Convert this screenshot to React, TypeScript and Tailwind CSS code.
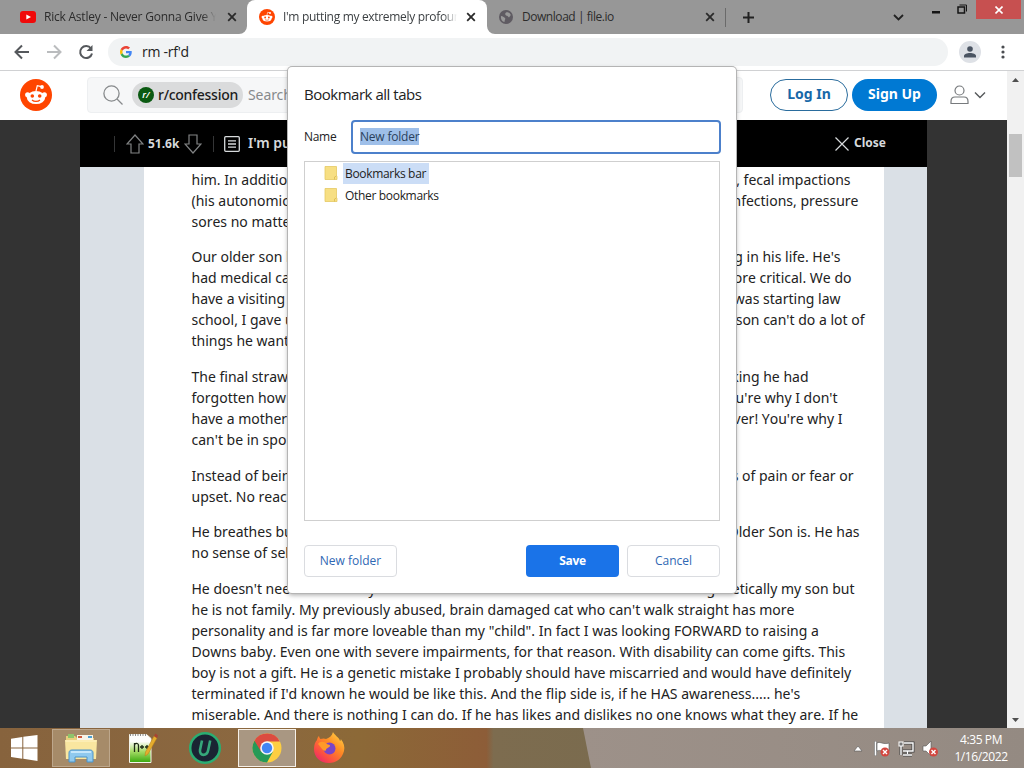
import clsx from "clsx";
import type { ReactNode } from "react";

type Line = { left: string; right?: string; end?: number };

const LEFT_EDGE = 192;

// lines split around the dialog, "end" is where the line stops
const paragraphs: Line[][] = [
  [
    { left: "him. In additio", right: ", fecal impactions", end: 851 },
    { left: "(his autonomic", right: "infections, pressure", end: 859 },
    { left: "sores no matte" },
  ],
  [
    { left: "Our older son h", right: "g in his life. He's", end: 841 },
    { left: "had medical ca", right: "ore critical. We do", end: 852 },
    { left: "have a visiting", right: "was starting law", end: 841 },
    { left: "school, I gave u", right: "son can't do a lot of", end: 865 },
    { left: "things he want" },
  ],
  [
    { left: "The final straw", right: "king he had", end: 809 },
    { left: "forgotten how", right: "ou're why I don't", end: 838 },
    { left: "have a mother", right: "ver! You're why I", end: 843 },
    { left: "can't be in spo" },
  ],
  [
    { left: "Instead of bein", right: "s of pain or fear or", end: 854 },
    { left: "upset. No reac" },
  ],
  [
    { left: "He breathes bu", right: "Older Son is. He has", end: 860 },
    { left: "no sense of sel" },
  ],
  [
    {
      left: "He doesn't need to be in my home. He doesn't know or care where he is. He is genetically my son but",
    },
    {
      left: "he is not family. My previously abused, brain damaged cat who can't walk straight has more",
    },
    {
      left: "personality and is far more loveable than my \"child\". In fact I was looking FORWARD to raising a",
    },
    {
      left: "Downs baby. Even one with severe impairments, for that reason. With disability can come gifts. This",
    },
    {
      left: "boy is not a gift. He is a genetic mistake I probably should have miscarried and would have definitely",
    },
    {
      left: "terminated if I'd known he would be like this. And the flip side is, if he HAS awareness..... he's",
    },
    {
      left: "miserable. And there is nothing I can do. If he has likes and dislikes no one knows what they are. If he",
    },
  ],
];

export default function App() {
  return (
    <div className="relative flex flex-col w-[1024px] h-[768px] overflow-hidden bg-white font-['Open_Sans',sans-serif] text-[#222]">
      <TabStrip />
      <Toolbar />
      <div className="flex h-[657px] overflow-hidden">
        <div className="flex flex-col w-[1007px]">
          <RedditHeader />
          <PostOverlay />
        </div>
        <Scrollbar />
      </div>
      <Taskbar />
      <BookmarkDialog />
    </div>
  );
}

function TabStrip() {
  return (
    <div className="flex h-[34px] shrink-0 bg-[#979797] text-xs">
      <div className="flex items-center w-[247px] pl-5">
        <svg width="16" height="12" viewBox="0 0 16 12">
          <rect width="16" height="12" rx="3" fill="#f00a0a" />
          <path d="M6.3 3.4v5.2L11 6z" fill="#fff" />
        </svg>
        <TabTitle className="w-[172px] ml-2 tracking-[-0.22px] text-[#2c2c2c] [mask-image:linear-gradient(90deg,#000_92%,transparent)]">
          Rick Astley - Never Gonna Give Y
        </TabTitle>
        <CloseGlyph className="ml-[11px]" />
      </div>
      <div className="relative flex items-center w-[240px] pl-3 rounded-t-lg bg-white">
        <Flare className="left-[-8px]" d="M8 0v8H0a8 8 0 0 0 8-8z" />
        <Flare className="right-[-8px]" d="M0 0v8h8a8 8 0 0 1-8-8z" />
        <Snoo size={16} />
        <TabTitle className="w-[174px] ml-2 tracking-[-0.32px] text-[#3c4043] [mask-image:linear-gradient(90deg,#000_92%,transparent)]">
          I'm putting my extremely profoun
        </TabTitle>
        <CloseGlyph className="ml-[9px]" />
      </div>
      <div className="flex items-center w-[239px] pl-3">
        <svg width="14" height="14" viewBox="0 0 14 14">
          <circle cx="7" cy="7" r="7" fill="#5f5b62" />
          <path
            d="M2 6c2 0 2.500 1 4 2 .8 1-.5 2-.5 4C3 11.500 1.500 9 2 6zM7 2.500c2-.8 4 .5 4.800 2.500L10 7.500 8.500 6 7 5.500 6 4z"
            fill="#999"
          />
        </svg>
        <TabTitle className="w-[175px] ml-[9px] tracking-[-0.45px] text-[#2c2c2c]">
          Download | file.io
        </TabTitle>
        <CloseGlyph className="ml-[8px]" />
        <div className="w-px h-[19px] ml-[10px] bg-[#6a6a6a]" />
      </div>
      <div className="flex items-center w-[206px] pl-[16px]">
        <svg width="13" height="13" viewBox="0 0 13 13" className="mr-[138px]">
          <path d="M6.500 1v11M1 6.500h11" stroke="#222" strokeWidth="2" />
        </svg>
        <svg width="11" height="7" viewBox="0 0 11 7">
          <path d="M1 1l4.500 4.500L10 1" stroke="#222" strokeWidth="1.800" fill="none" />
        </svg>
      </div>
      <div className="flex items-start w-[92px]">
        <svg width="8" height="3" viewBox="0 0 8 3" className="mt-[11px]">
          <rect width="8" height="2.500" fill="#151515" />
        </svg>
        <svg width="11" height="10" viewBox="0 0 11 10" className="mt-1 ml-[17px]" fill="none" stroke="#151515">
          <path d="M1 3h6.500v6H1z" strokeWidth="1.500" />
          <path d="M2.500 1H9.500V7.500" />
        </svg>
        <div className="flex items-center justify-center w-[45px] h-[19px] ml-2 bg-[#c75050]">
          <svg width="8" height="8" viewBox="0 0 8 8">
            <path d="M.5.5l7 7M7.500.5l-7 7" stroke="#fff" strokeWidth="1.600" />
          </svg>
        </div>
      </div>
    </div>
  );
}

function TabTitle({
  className,
  children,
}: {
  className: string;
  children: ReactNode;
}) {
  return (
    <span className={clsx("overflow-hidden whitespace-nowrap shrink-0", className)}>
      {children}
    </span>
  );
}

function Flare({ className, d }: { className: string; d: string }) {
  return (
    <svg width="8" height="8" viewBox="0 0 8 8" className={clsx("absolute bottom-0", className)}>
      <path d={d} fill="#fff" />
    </svg>
  );
}

function CloseGlyph({ className }: { className: string }) {
  return (
    <svg width="10" height="10" viewBox="0 0 10 10" className={clsx("shrink-0", className)}>
      <path d="M1.200 1.200l7.600 7.600M8.800 1.200L1.200 8.800" stroke="#2a2a2a" strokeWidth="1.800" />
    </svg>
  );
}

function Snoo({ size }: { size: number }) {
  return (
    <svg width={size} height={size} viewBox="0 0 32 32" className="shrink-0">
      <circle cx="16" cy="16" r="16" fill="#ff4500" />
      <circle cx="7.600" cy="15.800" r="2.500" fill="#fff" />
      <circle cx="24.400" cy="15.800" r="2.500" fill="#fff" />
      <ellipse cx="16" cy="18.600" rx="9.200" ry="6.500" fill="#fff" />
      <path d="M16 12l1.300-5.400 4.200 1" fill="none" stroke="#fff" strokeWidth="1.200" />
      <circle cx="22" cy="8" r="1.900" fill="#fff" />
      <circle cx="12.300" cy="17" r="1.800" fill="#ff4500" />
      <circle cx="19.700" cy="17" r="1.800" fill="#ff4500" />
      <path d="M12 21c2 1.900 6 1.900 8 0" fill="none" stroke="#ff4500" strokeWidth="1.200" />
    </svg>
  );
}

function Toolbar() {
  return (
    <div className="flex items-center h-[37px] shrink-0 pl-[14px] border-b border-[#d0d1d3] bg-white">
      <svg width="80" height="16" viewBox="0 0 80 16" fill="none" strokeWidth="2" className="mr-[14px]">
        <path d="M15 8H2M8 1.500L1.500 8 8 14.500" stroke="#55585c" />
        <path d="M33 8h13M40 1.500L46.500 8 40 14.500" stroke="#babcbe" />
        <path d="M77 4.500A6 6 0 1 0 78 9.500" stroke="#55585c" />
        <path d="M78.500 1v6h-6z" fill="#55585c" />
      </svg>
      <div className="flex items-center w-[840px] h-7 pl-3 rounded-full bg-[#f1f3f4]">
        <GoogleG />
        <span className="ml-[10px] text-sm tracking-[-0.25px]">rm -rf'd</span>
      </div>
      <div className="flex items-center justify-center w-[22px] h-[22px] ml-[11px] rounded-full bg-[#dee1e6]">
        <svg width="12" height="12" viewBox="0 0 12 12" fill="#4a5462">
          <circle cx="6" cy="3" r="2.800" />
          <path d="M0 11.500V10c0-2 3-3 6-3s6 1 6 3v1.500z" />
        </svg>
      </div>
      <svg width="4" height="14" viewBox="0 0 4 14" fill="#4a4d51" className="ml-[20px]">
        <circle cx="2" cy="2" r="1.600" />
        <circle cx="2" cy="7" r="1.600" />
        <circle cx="2" cy="12" r="1.600" />
      </svg>
    </div>
  );
}

function GoogleG() {
  return (
    <svg width="12" height="12" viewBox="0 0 48 48">
      <path fill="#EA4335" d="M24 9.500c3.540 0 6.710 1.220 9.210 3.600l6.850-6.850C35.900 2.380 30.470 0 24 0 14.620 0 6.510 5.380 2.560 13.220l7.980 6.190C12.430 13.720 17.740 9.500 24 9.500z" />
      <path fill="#4285F4" d="M46.980 24.550c0-1.570-.15-3.090-.38-4.550H24v9.020h12.940c-.58 2.960-2.260 5.480-4.780 7.180l7.730 6c4.510-4.180 7.090-10.360 7.090-17.650z" />
      <path fill="#FBBC05" d="M10.530 28.590c-.48-1.450-.76-2.990-.76-4.590s.27-3.140.76-4.590l-7.980-6.190C.92 16.460 0 20.120 0 24c0 3.880.92 7.540 2.560 10.780l7.970-6.190z" />
      <path fill="#34A853" d="M24 48c6.480 0 11.930-2.130 15.890-5.810l-7.730-6c-2.150 1.450-4.920 2.300-8.160 2.300-6.260 0-11.570-4.220-13.470-9.910l-7.980 6.190C6.510 42.620 14.620 48 24 48z" />
    </svg>
  );
}

function RedditHeader() {
  return (
    <div className="flex items-center h-[49px] shrink-0 pl-5 pb-px bg-white font-['Noto_Sans',sans-serif]">
      <Snoo size={32} />
      <div className="flex items-center w-[656px] h-9 ml-[35px] pl-[15px] rounded-sm border border-[#edeff1] bg-[#f6f7f8]">
        <svg width="20" height="20" viewBox="0 0 20 20" fill="none" stroke="#878a8c" strokeWidth="1.300">
          <circle cx="8.500" cy="8.500" r="7.600" />
          <path d="M14 14l5.500 5.500" />
        </svg>
        <div className="flex items-center w-[111px] h-[26px] ml-[9px] pl-[6px] rounded-full bg-[#dadbdc]">
          <div className="flex items-center justify-center w-4 h-4 rounded-full bg-[#0b5a12] text-[9px] font-semibold italic text-white">
            r/
          </div>
          <span className="ml-1 text-sm font-medium tracking-[-0.28px] text-[#1c1c1c]">
            r/confession
          </span>
        </div>
        <span className="ml-[5px] text-sm tracking-[-0.1px] text-[#878a8c]">Search</span>
      </div>
      <button className="w-[78px] h-8 ml-[27px] rounded-full border border-[#2a6c9d] pb-[2px] text-sm font-bold text-[#1868a8]">
        Log In
      </button>
      <button className="w-[85px] h-8 ml-1 rounded-full bg-[#0079d3] pb-[2px] text-sm font-bold text-white">
        Sign Up
      </button>
      <svg width="36" height="20" viewBox="0 0 36 20" fill="none" stroke="#777a7d" strokeWidth="1.200" className="ml-[13px]">
        <circle cx="9.500" cy="5.500" r="4.500" />
        <path d="M1 18.500v-2c0-3 2-4.500 4-4.500h9c2 0 4 1.500 4 4.500v2z" />
        <path d="M25 7.500l5 5 5-5" stroke="#55585a" strokeWidth="1.400" />
      </svg>
    </div>
  );
}

function PostOverlay() {
  return (
    <div className="flex flex-col h-[608px] pl-20 pr-20 bg-[#333] font-['Noto_Sans',sans-serif]">
      <div className="flex items-center w-[847px] h-[47px] shrink-0 pl-[34px] bg-black text-[#d7dadc]">
        <div className="w-px h-4 bg-[#343536]" />
        <svg width="18" height="20" viewBox="0 0 18 20" fill="none" stroke="#818384" strokeWidth="1.200" className="ml-[11px]">
          <path d="M9 1L1 10h4v9h8v-9h4z" />
        </svg>
        <span className="w-[34px] ml-[4px] text-xs font-bold">51.6k</span>
        <svg width="18" height="20" viewBox="0 0 18 20" fill="none" stroke="#818384" strokeWidth="1.200" className="ml-[2px]">
          <path d="M9 19l8-9h-4V1H5v9H1z" />
        </svg>
        <div className="w-px h-4 ml-[11px] bg-[#343536]" />
        <svg width="16" height="16" viewBox="0 0 16 16" fill="none" stroke="#d7dadc" strokeWidth="1.300" className="ml-[10px]">
          <rect x=".7" y=".7" width="14.600" height="14.600" rx="1" />
          <path d="M4 4.800h8M4 8h8M4 11.200h8" />
        </svg>
        <span className="w-[587px] ml-2 pb-px text-sm font-semibold whitespace-nowrap">I'm pu</span>
        <svg width="14" height="14" viewBox="0 0 14 14">
          <path d="M.5.5l13 13M13.500.5l-13 13" stroke="#d7dadc" strokeWidth="1.200" />
        </svg>
        <span className="ml-[5px] pb-[2px] text-xs font-bold">Close</span>
      </div>
      <div className="flex w-[847px] h-[561px] px-[64px] pr-[43px] bg-[#dae0e6] overflow-hidden">
        <div className="flex flex-col gap-[14.6px] w-[740px] pl-[47.500px] pt-[1.8px] bg-white text-sm leading-[21px] [font-kerning:none]">
          {paragraphs.map((lines, i) => (
            <div key={i} className="flex flex-col">
              {lines.map((line) => (
                <div
                  key={line.left}
                  className="flex justify-between h-[21px] whitespace-nowrap"
                  style={line.end ? { width: line.end - LEFT_EDGE } : undefined}
                >
                  <span>{line.left}</span>
                  {line.right && <span>{line.right}</span>}
                </div>
              ))}
            </div>
          ))}
        </div>
      </div>
    </div>
  );
}

function Scrollbar() {
  return (
    <div className="flex flex-col items-center justify-between w-[17px] pt-[7px] pb-[6px] bg-[#f1f1f1]">
      <div className="flex flex-col items-center">
        <svg width="7" height="4" viewBox="0 0 7 4">
          <path d="M0 4l3.500-4L7 4z" fill="#505050" />
        </svg>
        <div className="w-[13px] h-[43px] mt-[52px] bg-[#c1c1c1]" />
      </div>
      <svg width="7" height="4" viewBox="0 0 7 4">
        <path d="M0 0l3.500 4L7 0z" fill="#505050" />
      </svg>
    </div>
  );
}

function BookmarkDialog() {
  return (
    <div className="absolute left-[288px] top-[67px] flex flex-col w-[448px] h-[526px] px-4 rounded-[4px] bg-white text-xs shadow-[0_0_0_1px_#b4b4b4,0_2px_5px_rgba(0,0,0,0.35)]">
      <h1 className="mt-[16px] text-[15px] leading-[22px] tracking-[-0.48px]">
        Bookmark all tabs
      </h1>
      <div className="flex items-center mt-[15px]">
        <span className="w-[47px] shrink-0 tracking-[-0.3px]">Name</span>
        <div className="flex items-center w-[370px] h-[34px] shrink-0 pl-[7px] pb-px rounded-[4px] border-2 border-[#4c80cb]">
          <span className="bg-[#9ebfe9] leading-[17px] tracking-[-0.2px] text-[#2a3f5c]">
            New folder
          </span>
        </div>
      </div>
      <div className="flex flex-col w-[416px] h-[360px] mt-[7px] pl-[19px] border border-[#cfcfcf]">
        <FolderRow label="Bookmarks bar" selected />
        <FolderRow label="Other bookmarks" />
      </div>
      <div className="flex mt-6 font-medium">
        <DialogButton className="mr-[129px] border border-[#dadce0] text-[#2f68b4]">
          New folder
        </DialogButton>
        <DialogButton className="mr-2 bg-[#1a73e8] font-bold tracking-[-0.35px] text-white">
          Save
        </DialogButton>
        <DialogButton className="border border-[#dadce0] text-[#2f68b4]">
          Cancel
        </DialogButton>
      </div>
    </div>
  );
}

function FolderRow({ label, selected }: { label: string; selected?: boolean }) {
  return (
    <div className="flex items-center h-[22px]">
      <svg width="14" height="14" viewBox="0 0 14 14">
        <path d="M1 .5h11.500V10l.5.500v3H1z" fill="#f7df83" stroke="#e6c963" strokeWidth=".8" />
        <path d="M10.500 13.500V11l2-1" fill="none" stroke="#d9b94f" strokeWidth=".8" />
      </svg>
      <span
        className={clsx(
          "h-[21px] ml-[5px] px-[2px] leading-[21px] tracking-[-0.32px]",
          selected && "pr-[3px] bg-[#cbddf6]",
        )}
      >
        {label}
      </span>
    </div>
  );
}

function DialogButton({
  className,
  children,
}: {
  className: string;
  children: ReactNode;
}) {
  return (
    <button className={clsx("w-[93px] h-8 shrink-0 rounded-[4px]", className)}>
      {children}
    </button>
  );
}

function Taskbar() {
  return (
    <div className="relative flex h-10 shrink-0 bg-[linear-gradient(90deg,#87633d_0%,#8b6840_25%,#8c6937_35%,#8d5d38_47.500%,#7d6c4f_48.200%,#7a6b4e_60%)]">
      <div className="absolute inset-y-0 left-[583px] right-0 bg-[linear-gradient(90deg,#9d9189,#948a82)] [clip-path:polygon(0_0,100%_0,100%_100%,8px_100%)]" />
      <div className="relative flex items-center w-full">
        <svg width="27" height="26" viewBox="0 0 27 26" fill="#fff" className="ml-[11px]">
          <path d="M0 3.800L11.300 2v10.400H0zM12.300 1.800L26.500 0v12.400H12.300zM0 13.500h11.300v10.200L0 22zM12.300 13.500h14.200V26l-14.200-2.200z" />
        </svg>
        <div className="flex items-center justify-center w-[58px] h-[38px] ml-[14px] border border-[#bda78c] bg-[#a68b69]">
          <ExplorerIcon />
        </div>
        <NotepadIcon />
        <svg width="34" height="34" viewBox="0 0 34 34" className="ml-[30px]">
          <circle cx="17" cy="17" r="14.800" fill="#1a2433" stroke="#2aad72" strokeWidth="2.500" />
          <path d="M14 9.500l-2 9.500c-.8 6.500 7 6.500 8.200 0l2-9.500" fill="none" stroke="#35a87a" strokeWidth="2.600" />
        </svg>
        <div className="flex items-center justify-center w-[58px] h-[38px] ml-[16px] border border-[#f6f0e8] bg-[#a99782]">
          <ChromeIcon />
        </div>
        <FirefoxIcon />
        <Tray />
        <div className="w-[70px] ml-[7px] text-center text-xs leading-[17px] tracking-[-0.4px] text-white">
          <div>4:35 PM</div>
          <div>1/16/2022</div>
        </div>
      </div>
    </div>
  );
}

function ExplorerIcon() {
  return (
    <svg width="34" height="30" viewBox="0 0 34 30">
      <path d="M2 3h9l2 2h17v20H2z" fill="#e8cf7d" />
      <path d="M4 1h6v4H4z" fill="#8fc46b" />
      <path d="M13 2h16v5H13z" fill="#f8f4e6" />
      <path d="M14 3h4v2h-4z" fill="#cf5b3c" />
      <path d="M24 3h4v2h-4z" fill="#4b9fd0" />
      <path d="M1 7h32l-1 19H2z" fill="#f9e6a0" />
      <path d="M1.500 8h31" stroke="#fff3c7" />
      <path d="M5 29v-9c0-2 1-3 3-3h18c2 0 3 1 3 3v9h-6v-5H11v5z" fill="#8fc9ee" stroke="#4b93c9" />
      <path d="M7 19h20" stroke="#d9f1ff" strokeWidth="1.500" />
    </svg>
  );
}

function NotepadIcon() {
  return (
    <svg width="30" height="32" viewBox="0 0 30 32" className="ml-[18px]">
      <defs>
        <linearGradient id="npp" x1="0" y1="0" x2="0" y2="1">
          <stop offset=".25" stopColor="#fdfdfb" />
          <stop offset=".6" stopColor="#a8dc68" />
          <stop offset="1" stopColor="#38a80c" />
        </linearGradient>
      </defs>
      <path d="M1.500 2.500h17l4.500 4v24H1.500z" fill="url(#npp)" stroke="#f4f4ec" />
      <path d="M2 3h17" stroke="#666" strokeDasharray="1 1.500" strokeWidth="1.500" />
      <path d="M6.500 20v-9M6.500 12.500c2-2 4-1 4 1V20M12 15h4M14 13v4M17 15h4M19 13v4" fill="none" stroke="#1f2b16" strokeWidth="1.300" />
      <path d="M26 4l3 2-9 16-3 2 .5-4z" fill="#e6ad2d" stroke="#b87d18" strokeWidth=".5" />
      <path d="M26 4l1.500-2.500 2.500 2L29 6z" fill="#a84332" />
    </svg>
  );
}

function ChromeIcon() {
  return (
    <svg width="30" height="30" viewBox="0 0 30 30">
      <circle cx="15" cy="15" r="14.500" fill="#fdce41" />
      <path d="M2.440 7.750A14.500 14.500 0 0 0 15 29.500l6-11L15 15z" fill="#259a57" />
      <path d="M2.440 7.750A14.500 14.500 0 0 1 27.900 8.500H15L9 18.500z" fill="#dc4c40" />
      <circle cx="15" cy="15" r="6.800" fill="#f6f6f6" />
      <circle cx="15" cy="15" r="5.200" fill="#4285f4" />
    </svg>
  );
}

function FirefoxIcon() {
  return (
    <svg width="32" height="32" viewBox="0 0 32 32" className="ml-[17px]">
      <defs>
        <linearGradient id="ff" x1="1" y1="0" x2=".2" y2="1">
          <stop offset="0" stopColor="#ffe14a" />
          <stop offset=".45" stopColor="#ff8a24" />
          <stop offset=".8" stopColor="#fb4a45" />
          <stop offset="1" stopColor="#e8286e" />
        </linearGradient>
      </defs>
      <path d="M20 0c1 3 6 5 7 9 1-.5.8-1.500.8-2C31 11 32 15 31 19c-2 8-8 12-15 12C7 31 1 25 1 17c0-4 1-7 3-9 0 0 .5-3 2-4 0 1 1 2.500 1.500 3C10 6 12 6.500 13 7c3-1 6-3 7-7z" fill="url(#ff)" />
      <circle cx="16.500" cy="16.500" r="6" fill="#7a45c8" />
      <path d="M5 12c2-3 6-3 9 0 1 1 3 0 3 2-1 2-4 2-4 4 0 1-2 1-3 0-2-2-3-4-5-6z" fill="#ff9a28" />
    </svg>
  );
}

function Tray() {
  return (
    <svg width="86" height="20" viewBox="0 0 86 20" className="ml-[508px]" fill="none">
      <path d="M1 13l4-5 4 5z" fill="#fff" stroke="#555" strokeWidth=".6" />
      {/* action center flag */}
      <path d="M22.500 3.500v14" stroke="#555" strokeWidth="3" />
      <path d="M22.500 3.500v14" stroke="#fff" strokeWidth="1.800" />
      <path d="M24 5c3-2 6 2 12 0v8c-6 2-8-2-12 0z" fill="#fff" stroke="#555" strokeWidth=".6" />
      <circle cx="32" cy="14" r="4.500" fill="#d2473f" />
      <path d="M30 12l4 4M34 12l-4 4" stroke="#fff" strokeWidth="1.400" />
      {/* network */}
      <path d="M51 5h9v8H50M54.500 13v3M50 17h9M48 8v9" stroke="#444" strokeWidth="3" />
      <path d="M51 5h9v8H50M54.500 13v3M50 17h9M48 8v9" stroke="#fff" strokeWidth="1.400" />
      <rect x="46" y="4" width="4" height="4" fill="#777" stroke="#fff" />
      {/* volume */}
      <path d="M70 8h3l5-5v15l-5-5h-3z" fill="#fff" stroke="#555" strokeWidth=".6" />
      <circle cx="80.500" cy="14" r="4.500" fill="#d2473f" />
      <path d="M78.500 12l4 4M82.500 12l-4 4" stroke="#fff" strokeWidth="1.400" />
    </svg>
  );
}
